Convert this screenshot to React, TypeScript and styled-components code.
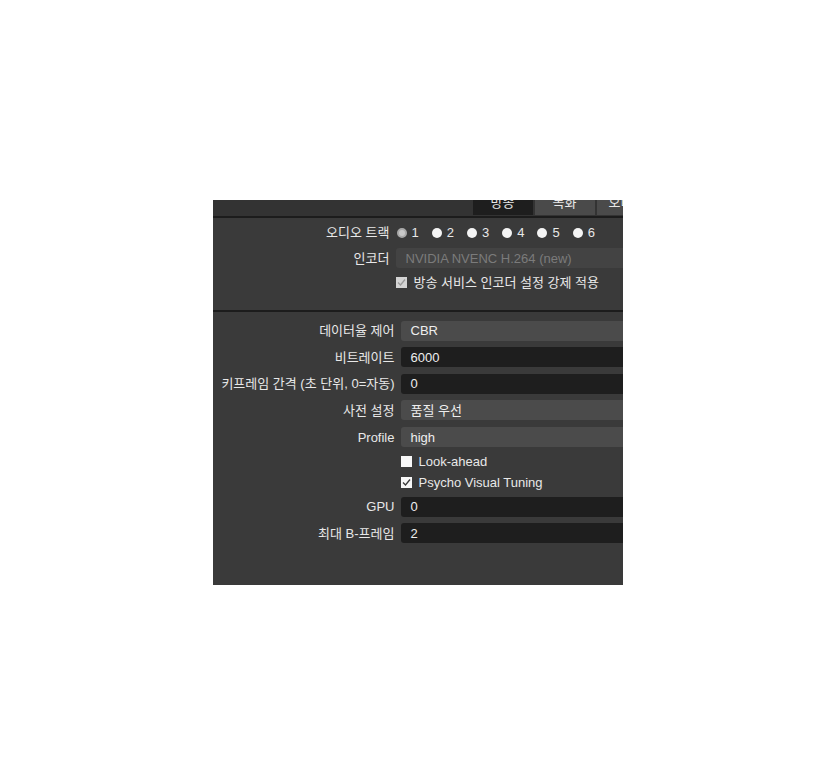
import React from 'react';
import styled, { createGlobalStyle } from 'styled-components';

const GlobalStyle = createGlobalStyle`
  html, body {
    margin: 0;
    padding: 0;
    background: #ffffff;
  }
`;

const Page = styled.div`
  height: 784px;
  display: flex;
  align-items: center;
  justify-content: center;
  font-family: "Liberation Sans", "Noto Sans CJK KR", sans-serif;
  font-size: 13px;
`;

const Panel = styled.div`
  width: 410px;
  height: 385px;
  overflow: hidden;
  background: #3a3a3a;
  display: flex;
  flex-direction: column;
  color: #e8e8e8;
`;

const TabBar = styled.div`
  height: 15px;
  background: #333333;
  display: flex;
  gap: 2px;
  padding-left: 260px;
  overflow: hidden;
  border-bottom: 1px solid #333333;
`;

const Tab = styled.div<{ $active?: boolean }>`
  flex: none;
  width: 60px;
  height: 26px;
  margin-top: -11px;
  display: flex;
  align-items: center;
  justify-content: center;
  background: ${p => (p.$active ? '#1e1e1e' : '#4a4a4a')};
  color: #e8e8e8;
  font-size: 13px;
`;

const Divider = styled.div`
  height: 2px;
  background: #1c1c1c;
  flex: none;
`;

const Section = styled.div<{ $label: number; $pt: number; $pb: number }>`
  display: grid;
  grid-template-columns: ${p => p.$label}px 300px;
  column-gap: 6px;
  row-gap: 6.6px;
  align-items: center;
  line-height: 15px;
  padding: ${p => p.$pt}px 0 ${p => p.$pb}px 0;
`;

const Label = styled.div`
  text-align: right;
  white-space: nowrap;
  grid-column: 1;
`;

const Field = styled.div`
  grid-column: 2;
  display: flex;
  align-items: center;
`;

const Box = styled.div<{ $variant: 'combo' | 'edit' | 'disabled' }>`
  height: 20px;
  width: 300px;
  box-sizing: border-box;
  border-radius: 3px;
  padding-left: 10px;
  display: flex;
  align-items: center;
  background: ${p =>
    p.$variant === 'edit' ? '#1e1e1e' : p.$variant === 'combo' ? '#4b4b4b' : '#434343'};
  color: ${p => (p.$variant === 'disabled' ? '#7b7b7b' : '#eeeeee')};
`;

const RadioGroup = styled.div`
  height: 18px;
  display: flex;
  align-items: center;
  gap: 12px;
`;

const RadioItem = styled.div`
  display: flex;
  align-items: center;
  gap: 5px;
`;

const RadioDot = styled.span<{ $checked?: boolean }>`
  width: 10px;
  height: 10px;
  border-radius: 50%;
  box-sizing: border-box;
  background: ${p => (p.$checked ? '#c8c8c8' : '#f4f4f4')};
  border: ${p => (p.$checked ? '2px solid #a9a9a9' : 'none')};
  margin-left: 1px;
`;

const CheckRow = styled.div`
  height: 15px;
  display: flex;
  align-items: center;
  gap: 7px;
`;

const CheckSquare = styled.span<{ $disabled?: boolean }>`
  width: 11px;
  height: 11px;
  flex: none;
  background: ${p => (p.$disabled ? '#d4d4d4' : '#f7f7f7')};
  display: flex;
  align-items: center;
  justify-content: center;
`;

const Spacer = styled.div`
  flex: 1;
`;

const Check: React.FC<{ checked?: boolean; disabled?: boolean }> = ({ checked, disabled }) => (
  <CheckSquare $disabled={disabled}>
    {checked && (
      <svg width="9" height="9" viewBox="0 0 9 9">
        <path
          d="M1 4.5 L3.5 7 L8 1.5"
          fill="none"
          stroke={disabled ? '#9a9a9a' : '#3a3a3a'}
          strokeWidth="1.3"
        />
      </svg>
    )}
  </CheckSquare>
);

export default function App() {
  return (
    <>
      <GlobalStyle />
      <Page>
        <Panel>
          <TabBar>
            <Tab $active>방송</Tab>
            <Tab>녹화</Tab>
            <Tab>오디오</Tab>
          </TabBar>
          <Divider />
          <Section $label={177} $pt={6} $pb={20}>
            <Label>오디오 트랙</Label>
            <Field>
              <RadioGroup>
                {[1, 2, 3, 4, 5, 6].map(n => (
                  <RadioItem key={n}>
                    <RadioDot $checked={n === 1} />
                    <span>{n}</span>
                  </RadioItem>
                ))}
              </RadioGroup>
            </Field>
            <Label>인코더</Label>
            <Field>
              <Box $variant="disabled">NVIDIA NVENC H.264 (new)</Box>
            </Field>
            <Field>
              <CheckRow>
                <Check checked disabled />
                <span>방송 서비스 인코더 설정 강제 적용</span>
              </CheckRow>
            </Field>
          </Section>
          <Divider />
          <Section $label={182} $pt={9} $pb={0}>
            <Label>데이터율 제어</Label>
            <Field><Box $variant="combo">CBR</Box></Field>
            <Label>비트레이트</Label>
            <Field><Box $variant="edit">6000</Box></Field>
            <Label>키프레임 간격 (초 단위, 0=자동)</Label>
            <Field><Box $variant="edit">0</Box></Field>
            <Label>사전 설정</Label>
            <Field><Box $variant="combo">품질 우선</Box></Field>
            <Label>Profile</Label>
            <Field><Box $variant="combo">high</Box></Field>
            <Field>
              <CheckRow>
                <Check />
                <span>Look-ahead</span>
              </CheckRow>
            </Field>
            <Field>
              <CheckRow>
                <Check checked />
                <span>Psycho Visual Tuning</span>
              </CheckRow>
            </Field>
            <Label>GPU</Label>
            <Field><Box $variant="edit">0</Box></Field>
            <Label>최대 B-프레임</Label>
            <Field><Box $variant="edit">2</Box></Field>
          </Section>
          <Spacer />
        </Panel>
      </Page>
    </>
  );
}
